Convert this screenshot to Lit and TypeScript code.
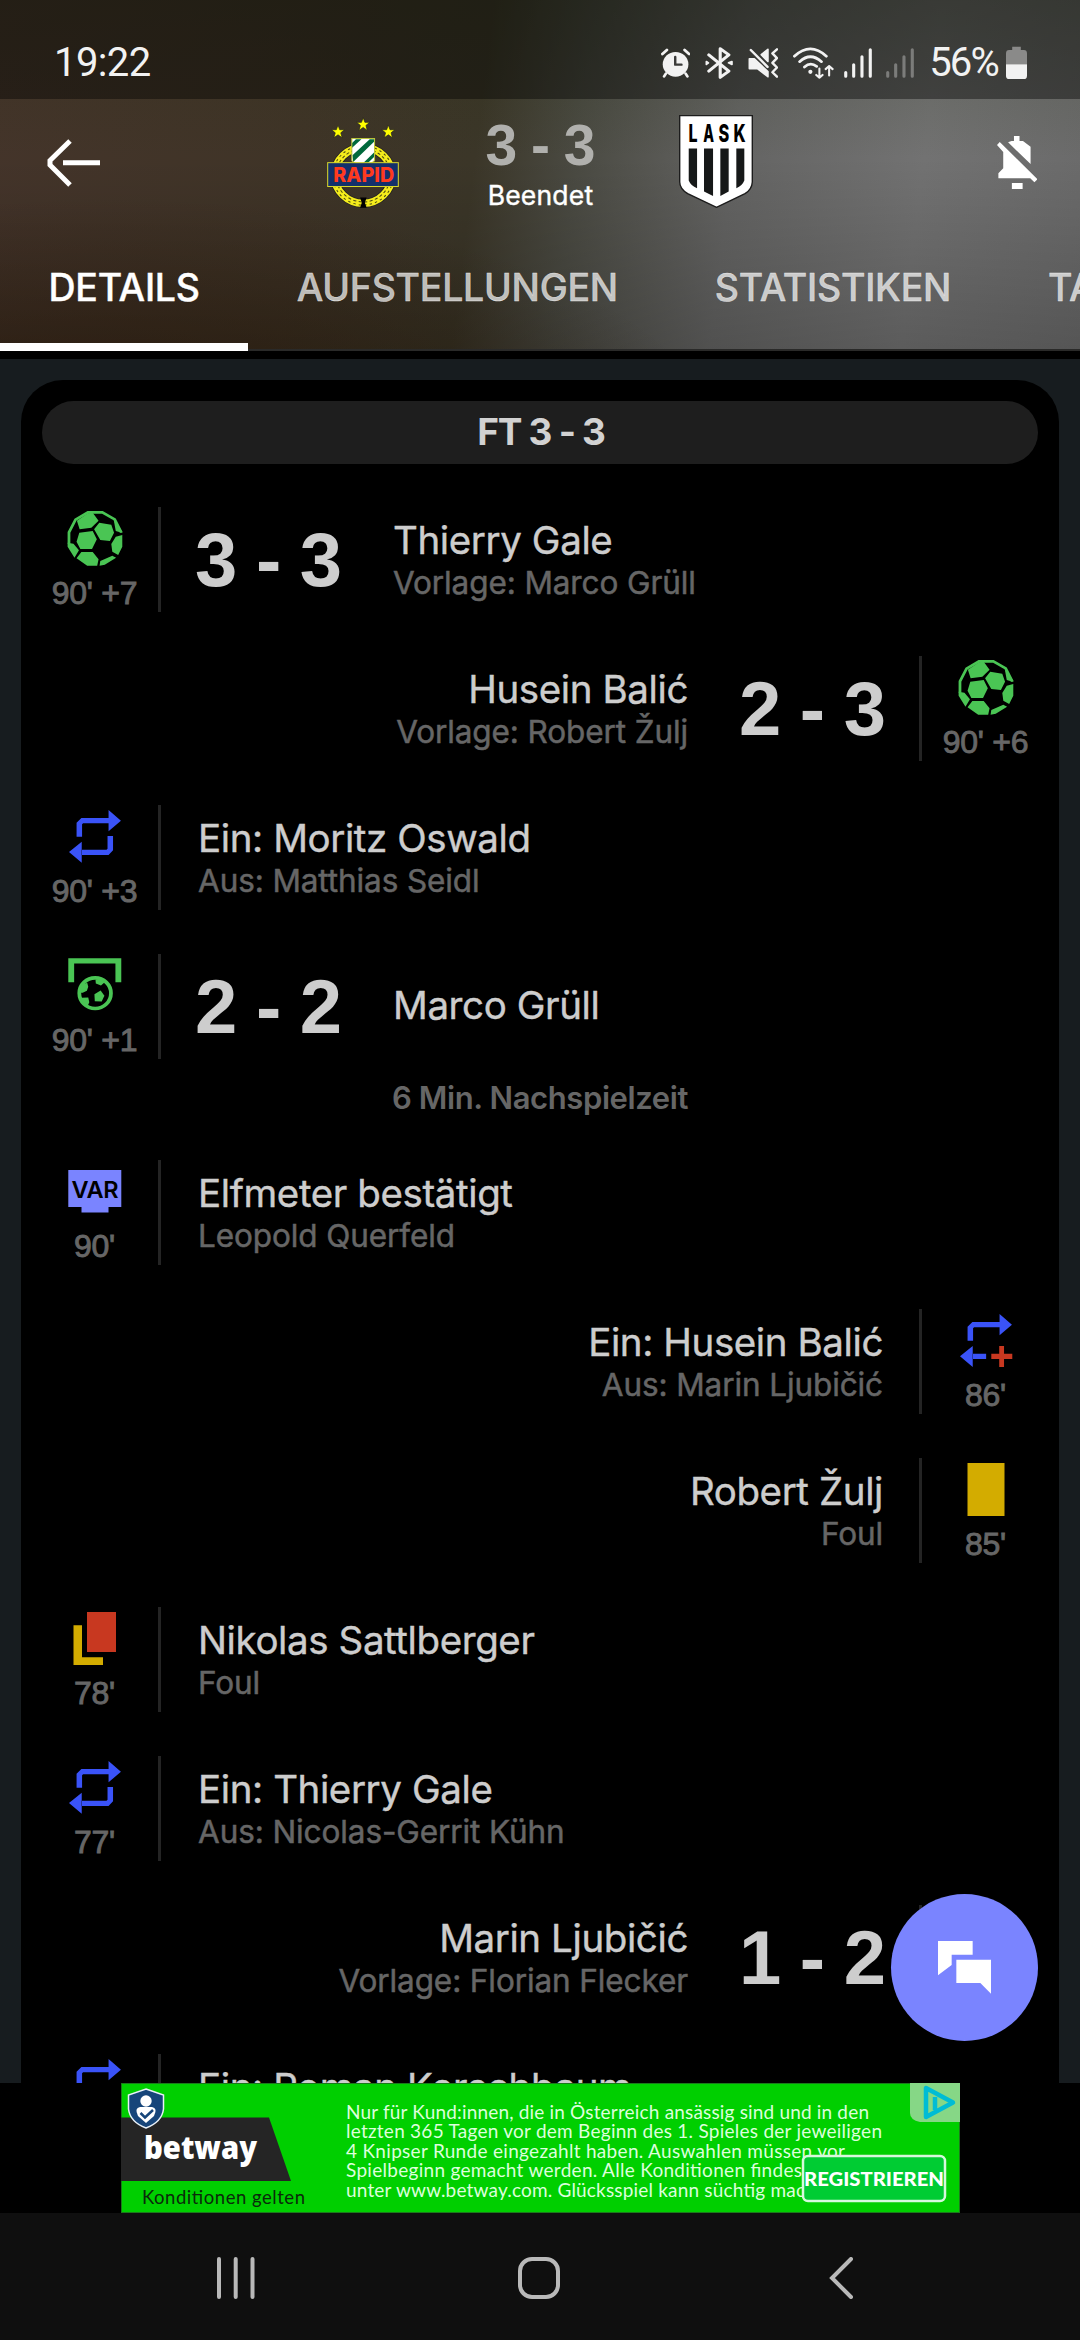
import { LitElement, html, svg, css, nothing, TemplateResult } from 'lit'
import { customElement, property } from 'lit/decorators.js'

type IconName = 'goal' | 'penalty' | 'sub' | 'injury-sub' | 'var' | 'yellow' | 'second-yellow'

interface MatchEvent {
    side: 'home' | 'away'
    icon: IconName
    time: string
    title: string
    detail?: string
    score?: string
    /** Centered remark shown below the event */
    note?: string
}

const EVENTS: MatchEvent[] = [
    { side: 'home', icon: 'goal', time: "90' +7", score: '3 - 3', title: 'Thierry Gale', detail: 'Vorlage: Marco Grüll' },
    { side: 'away', icon: 'goal', time: "90' +6", score: '2 - 3', title: 'Husein Balić', detail: 'Vorlage: Robert Žulj' },
    { side: 'home', icon: 'sub', time: "90' +3", title: 'Ein: Moritz Oswald', detail: 'Aus: Matthias Seidl' },
    { side: 'home', icon: 'penalty', time: "90' +1", score: '2 - 2', title: 'Marco Grüll', note: '6 Min. Nachspielzeit' },
    { side: 'home', icon: 'var', time: "90'", title: 'Elfmeter bestätigt', detail: 'Leopold Querfeld' },
    { side: 'away', icon: 'injury-sub', time: "86'", title: 'Ein: Husein Balić', detail: 'Aus: Marin Ljubičić' },
    { side: 'away', icon: 'yellow', time: "85'", title: 'Robert Žulj', detail: 'Foul' },
    { side: 'home', icon: 'second-yellow', time: "78'", title: 'Nikolas Sattlberger', detail: 'Foul' },
    { side: 'home', icon: 'sub', time: "77'", title: 'Ein: Thierry Gale', detail: 'Aus: Nicolas-Gerrit Kühn' },
    { side: 'away', icon: 'goal', time: '', score: '1 - 2', title: 'Marin Ljubičić', detail: 'Vorlage: Florian Flecker' },
    { side: 'home', icon: 'sub', time: '', title: 'Ein: Roman Kerschbaum', detail: '\u00a0' },
]

const SUB_IN = svg`<path d="M115 0L151 32L115 64ZM22 80V38L36 24H116V40H41L38 43V80Z"/>`

const ICONS: Record<IconName, TemplateResult> = {
    goal: svg`
        <g transform="translate(.6 0) scale(.344 .3333)" fill="#4ac554">
            <path d="M27 29L59 7L73 5L90 29L69 50L35 55ZM77 55L92 35L127 41L135 65L123 90L95 87Z"/>
            <path d="M34 65L73 60L85 85L71 114L37 114L26 92ZM140 77L159 72V107L147 132L130 122L127 99Z"/>
            <path d="M26 142L40 123H73L90 145L86 164H57ZM0 95L17 98L33 118L20 140L0 107Z"/>
            <path d="M93 164L95 150L130 134L141 140L108 161ZM134 26L159 62V66L140 60Z"/>
            <path d="M4 98V64L23 26L59 4H101L137 25L156 64" fill="none" stroke="#4ac554" stroke-width="8"/>
        </g>`,
    penalty: svg`
        <g transform="translate(1.3 .2) scale(.344 .3333)" fill="#4ac554">
            <path d="M0 72V0H154V72H137V16H17V72Z"/>
            <circle cx="78" cy="105" r="46" fill="none" stroke="#4ac554" stroke-width="11"/>
            <path d="M79 64L104 66L106 72L95 82L80 76ZM34 82L55 74L58 86L54 98L42 104L32 104ZM38 119L58 118L61 132L56 144L44 138Z"/>
            <path d="M76 108L94 97L105 113L97 130L77 129Z"/>
        </g>`,
    sub: svg`
        <g transform="translate(2 1) scale(.344 .3333)" fill="#3a53f8">
            ${SUB_IN}
            <path d="M37 95L0 126L37 158ZM128 78V121L115 135H36V119H109L112 116V78Z"/>
        </g>`,
    'injury-sub': svg`
        <g transform="translate(2 1) scale(.344 .3333)" fill="#3a53f8">
            ${SUB_IN}
            <path d="M37 96L0 127L37 159ZM36 119H76V135H36Z"/>
            <path d="M114 96H128V119H152V135H128V159H114V135H91V119H114Z" fill="#c83820"/>
        </g>`,
    var: svg`
        <path d="M1.3 6H54.3V43H41.5V48.5H14.5V43H1.3Z" fill="#7a84ff"/>
        <text x="4.5" y="33.8" textLength="47" font-family="Inter, sans-serif" font-weight="600" font-size="23.5">VAR</text>`,
    yellow: svg`<path d="M9.5 1H46.5V54H9.5Z" fill="#d3ac00"/>`,
    'second-yellow': svg`
        <path d="M6.5 14.3H15V46.3H36V54H6.5Z" fill="#d3ac00"/>
        <path d="M20 1H49V41H20Z" fill="#c83820"/>`,
}

@customElement('event-row')
export class EventRow extends LitElement {
    @property({ attribute: false })
    event!: MatchEvent

    static styles = css`
        :host {
            display: block;
        }

        .row {
            display: flex;
            height: 105px;
        }

        .away {
            flex-direction: row-reverse;
            text-align: right;
        }

        .marker {
            width: 105px;
            display: flex;
            flex-direction: column;
            align-items: center;
            padding-top: 4px;
            box-sizing: border-box;
        }

        .marker svg {
            width: 56px;
            height: 56px;
            flex: none;
        }

        .time {
            margin-top: 10px;
            color: #666;
            font: 32px/32px 'Liberation Sans', Arial, sans-serif;
            letter-spacing: -0.3px;
            white-space: pre;
            -webkit-text-stroke: 0.9px #666;
        }

        .divider {
            width: 3px;
            margin: 0 11px;
            background: #242424;
        }

        .score {
            width: 148px;
            margin: 0 22px 0 23px;
            color: #cdcdcd;
            font: bold 76px/106px 'Liberation Sans', Arial, sans-serif;
            word-spacing: -2.5px;
            white-space: nowrap;
        }

        .away .score {
            margin: 0 22px;
        }

        .text {
            display: flex;
            flex-direction: column;
            justify-content: center;
            padding: 0 26px;
            font-family: Inter, sans-serif;
        }

        .away .text {
            padding: 0 25px;
        }

        .row .score + .text {
            padding: 0;
            margin: 0 28px;
        }

        .title {
            color: #cdcdcd;
            font-size: 38.5px;
            line-height: 46px;
            letter-spacing: -0.4px;
            -webkit-text-stroke: 0.4px #cdcdcd;
        }

        .title:only-child {
            margin-bottom: 3px;
        }

        .detail {
            color: #666;
            font-size: 31.5px;
            line-height: 39px;
            letter-spacing: -0.1px;
            -webkit-text-stroke: 0.5px #666;
        }

        .note {
            margin: 22px 0 2px;
            color: #666;
            font: 600 31px/33px Inter, sans-serif;
            text-align: center;
            letter-spacing: -0.4px;
        }
    `

    render() {
        const { side, icon, time, title, detail, score, note } = this.event
        return html`
            <div class="row ${side}">
                <div class="marker">
                    <svg viewBox="0 0 56 56">${ICONS[icon]}</svg>
                    <div class="time">${time}</div>
                </div>
                <div class="divider"></div>
                ${score ? html`<div class="score">${score}</div>` : nothing}
                <div class="text">
                    <div class="title">${title}</div>
                    ${detail ? html`<div class="detail">${detail}</div>` : nothing}
                </div>
            </div>
            ${note ? html`<div class="note">${note}</div>` : nothing}
        `
    }
}

@customElement('status-bar')
export class StatusBar extends LitElement {
    static styles = css`
        :host {
            display: flex;
            align-items: center;
            height: 99px;
            padding: 26px 53px 0 54px;
            box-sizing: border-box;
            background: rgba(0, 0, 0, 0.4);
            color: #f2f2f2;
            font: 40px/40px Roboto, sans-serif;
        }

        .clock {
            flex: 1;
            letter-spacing: -0.6px;
        }

        .icons {
            display: flex;
            align-items: center;
        }

        svg {
            display: block;
            fill: #f2f2f2;
            stroke: #f2f2f2;
            stroke-linecap: round;
            stroke-linejoin: round;
        }

        .signal {
            margin-left: 10px;
        }

        .weak {
            margin-left: 14px;
            opacity: 0.35;
        }

        .gap {
            margin-left: 15px;
        }

        .percent {
            letter-spacing: -1.8px;
            margin: 0 8px 0 15px;
        }

        .empty {
            fill: #8a8a89;
            stroke: none;
        }

        .charge {
            stroke: none;
        }
    `

    private signal(cls: string) {
        return html`
            <svg class=${cls} width="28" height="30" viewBox="0 0 81 89" preserveAspectRatio="none">
                <path d="M5 73V84M28 50V84M52 26V84M76 5V84" stroke-width="9"/>
            </svg>
        `
    }

    render() {
        return html`
            <div class="clock">19:22</div>
            <div class="icons">
                <svg width="29.5" height="30" viewBox="0 0 85 90" preserveAspectRatio="none">
                    <circle cx="42" cy="49" r="37" stroke="none"/>
                    <path d="M4 18L17 6M68 6L81 18M14 77L9 85M71 77L76 85" fill="none" stroke-width="8"/>
                    <path d="M41 27V50H59" fill="none" stroke="#3b3b3a" stroke-width="7"/>
                </svg>
                <svg class="gap" width="28" height="32" viewBox="0 0 81 97" preserveAspectRatio="none">
                    <path d="M11 24L69 73L44 92V5L69 24L11 73" fill="none" stroke-width="9"/>
                    <path d="M4 44L10 48L4 53ZM68 48L78 44V53Z" stroke-width="5"/>
                </svg>
                <svg class="gap" width="30" height="30" viewBox="0 0 86 89" preserveAspectRatio="none">
                    <path d="M4 32H18L57 70V85L27 61H4ZM38 20L57 4V40Z" stroke-width="5"/>
                    <path d="M8 6L56 56" fill="none" stroke-width="7"/>
                    <path d="M83 4L70 16L83 30L70 44L83 58L70 72L83 85" fill="none" stroke-width="7"/>
                </svg>
                <svg class="gap" width="41" height="32" viewBox="0 0 118 94" preserveAspectRatio="none">
                    <path d="M4 27Q50 -16 96 27M19 43Q50 14 82 43M33 59Q50 43 68 57" fill="none" stroke-width="8"/>
                    <circle cx="50" cy="73" r="6" stroke="none"/>
                    <path d="M76 63V90M67 82L76 90L85 82M104 84V56M94 65L104 56L114 65" fill="none" stroke-width="6"/>
                </svg>
                ${this.signal('signal')}
                ${this.signal('weak')}
                <span class="percent">56%</span>
                <svg width="21" height="33" viewBox="0 0 61 98" preserveAspectRatio="none">
                    <path class="empty" d="M18 2H43V12H52Q61 12 61 22V54H0V22Q0 12 9 12H18Z"/>
                    <path class="charge" d="M0 54H61V88Q61 98 52 98H9Q0 98 0 88Z"/>
                </svg>
            </div>
        `
    }
}

@customElement('match-header')
export class MatchHeader extends LitElement {
    static styles = css`
        :host {
            display: block;
            height: 351px;
            overflow: hidden;
            background:
                radial-gradient(ellipse 620px 260px at 10% 130%, rgba(34, 18, 2, 0.65), transparent),
                linear-gradient(180deg, rgba(40, 50, 20, 0.25), transparent 45%, rgba(0, 0, 0, 0.2)),
                linear-gradient(97deg, #44342a 0%, #3f3427 28%, #3b3628 44%, #4a4a42 53%, #646463 67%, #727272 84%, #6a6a6a 100%);
            font-family: Inter, sans-serif;
        }

        .bar {
            display: grid;
            grid-template-columns: 327px 73px 279px 74px 1fr;
            height: 133px;
        }

        .back {
            padding: 40px 0 0 47px;
        }

        .home {
            padding-top: 18px;
        }

        .guest {
            padding-top: 16px;
        }

        .bell {
            display: flex;
            justify-content: flex-end;
            padding: 37px 43px 0 0;
        }

        svg {
            display: block;
        }

        .result {
            padding: 18px 0 0 2px;
            text-align: center;
        }

        .score {
            color: #b0b0ad;
            font: bold 57px/56px 'Liberation Sans', Arial, sans-serif;
            word-spacing: -2px;
        }

        .state {
            color: #fff;
            font-size: 26.5px;
            line-height: 44px;
            letter-spacing: 0.2px;
            -webkit-text-stroke: 0.4px #fff;
        }

        .tabs {
            display: flex;
            height: 119px;
            box-shadow: inset 0 -2px #2a2a29;
        }

        .tab {
            flex: none;
            padding: 0 48.5px;
            color: rgba(255, 255, 255, 0.7);
            font-size: 37.5px;
            font-weight: 500;
            line-height: 111px;
            letter-spacing: -0.27px;
            border-bottom: 8px solid transparent;
            -webkit-text-stroke: 0.4px currentColor;
        }

        .active {
            color: #fff;
            border-color: #fff;
        }
    `

    private star(x: number, y: number) {
        return svg`<path transform="translate(${x} ${y})" d="M0 -20L5 -6H19L8 3L12 18L0 9L-12 18L-8 3L-19 -6H-5Z" fill="#ff0" stroke="#222" stroke-width="2"/>`
    }

    render() {
        return html`
            <status-bar></status-bar>
            <div class="bar">
                <div class="back">
                    <svg width="54" height="48" viewBox="0 0 54 48" fill="none" stroke="#fff" stroke-width="5">
                        <path d="M23 2L3 21.5V26L23 46M16 23.8H53"/>
                    </svg>
                </div>
                <div class="home">
                    <svg width="72" height="91" viewBox="0 0 209 271" preserveAspectRatio="none">
                        ${this.star(32, 44)}${this.star(105, 22)}${this.star(178, 44)}
                        <circle cx="105" cy="174" r="83" fill="none" stroke="#222" stroke-width="27"/>
                        <circle cx="105" cy="174" r="83" fill="none" stroke="#f4ec1c" stroke-width="22"/>
                        <circle cx="105" cy="174" r="88" fill="none" stroke="#4b4a10" stroke-width="3" stroke-dasharray="7 9"/>
                        <circle cx="105" cy="174" r="79" fill="none" stroke="#4b4a10" stroke-width="3" stroke-dasharray="9 7"/>
                        <path d="M96 240H115L110 255L115 270H96L101 255Z" fill="#000"/>
                        <path d="M72 64H138V130Q130 140 105 144Q80 140 72 130Z" fill="#fff"/>
                        <path d="M72 92L100 66H84L72 78ZM76 134L138 72V66H124L74 114ZM100 142L138 104V118L118 138Z" fill="#00693c"/>
                        <path d="M72 64H138V130Q130 140 105 144Q80 140 72 130Z" fill="none" stroke="#b9c23a" stroke-width="3"/>
                        <rect x="2" y="136" width="205" height="71" fill="#13306b" stroke="#d8d82c" stroke-width="3"/>
                        <text x="18" y="193" textLength="177" lengthAdjust="spacingAndGlyphs" font-weight="800" font-size="58" fill="#ff3a1e">RAPID</text>
                    </svg>
                </div>
                <div class="result">
                    <div class="score">3 - 3</div>
                    <div class="state">Beendet</div>
                </div>
                <div class="guest">
                    <svg width="74" height="93" viewBox="0 0 213 278" preserveAspectRatio="none">
                        <path d="M2 2H211V200Q210 222 190 235L108 276L25 235Q2 220 2 200Z" fill="#fff" stroke="#1c1c1c" stroke-width="4"/>
                        <g font-weight="800" font-size="72" fill="#000">
                            <text x="27" y="82" textLength="26" lengthAdjust="spacingAndGlyphs">L</text>
                            <text x="70" y="82" textLength="31" lengthAdjust="spacingAndGlyphs">A</text>
                            <text x="114" y="82" textLength="31" lengthAdjust="spacingAndGlyphs">S</text>
                            <text x="157" y="82" textLength="35" lengthAdjust="spacingAndGlyphs">K</text>
                        </g>
                        <path d="M28 100H52V219Q34 212 28 196ZM72 100H98V242L72 229ZM119 100H143V229L119 242ZM165 100H188V196Q182 212 165 219Z" fill="#161818"/>
                    </svg>
                </div>
                <div class="bell">
                    <svg width="40.5" height="53" viewBox="0 0 117 159" preserveAspectRatio="none" fill="#fff">
                        <path d="M49 0H65V15H75L97 32V84L32 19L42 15H49ZM43 141H74V159H43Z"/>
                        <path d="M8 18L117 130L108 139L96 127H4V112L18 97V48L0 27Z"/>
                    </svg>
                </div>
            </div>
            <div class="tabs">
                <div class="tab active">DETAILS</div>
                <div class="tab">AUFSTELLUNGEN</div>
                <div class="tab">STATISTIKEN</div>
                <div class="tab">TABELLE</div>
            </div>
        `
    }
}

@customElement('ad-banner')
export class AdBanner extends LitElement {
    static styles = css`
        :host {
            display: flex;
            justify-content: center;
            height: 130px;
            background: #000;
        }

        svg {
            display: block;
        }

        .copy {
            font: 19px Lato, sans-serif;
            fill: #dcffdc;
        }

        .terms {
            font: 18.5px Lato, sans-serif;
            fill: #0b2a0b;
        }

        .brand {
            font: 800 31px 'Open Sans', sans-serif;
            fill: #fff;
        }

        .cta {
            font: 900 18px Lato, sans-serif;
            fill: #fff;
        }
    `

    render() {
        return html`
            <svg width="839" height="130" viewBox="0 0 839 130">
                <rect x=".5" y=".5" width="838" height="129" fill="#00cf00" stroke="#1b7a1b"/>
                <path d="M0 34.5H148L170 98H0Z" fill="#252525"/>
                <text class="brand" x="23" y="76" textLength="113" lengthAdjust="spacingAndGlyphs">betway</text>
                <path d="M25 6L42.5 12V26Q41 39 25 45Q9 39 7.5 26V12Z" fill="#16457a" stroke="#e8f0f8" stroke-width="1.5"/>
                <circle cx="25" cy="18" r="5.7" fill="#fff"/>
                <path d="M25 40L17 33Q13 25 19 24H31Q37 25 33 33Z" fill="#fff"/>
                <path d="M19.5 30L24 34.5L32 27" fill="none" stroke="#16457a" stroke-width="2.5"/>
                <text class="terms" x="21" y="121" textLength="163">Konditionen gelten</text>
                <g class="copy">
                    <text x="225" y="35.8" textLength="523">Nur für Kund:innen, die in Österreich ansässig sind und in den</text>
                    <text x="225" y="55.3" textLength="536">letzten 365 Tagen vor dem Beginn des 1. Spieles der jeweiligen</text>
                    <text x="225" y="74.8" textLength="499">4 Knipser Runde eingezahlt haben. Auswahlen müssen vor</text>
                    <text x="225" y="94.3" textLength="456">Spielbeginn gemacht werden. Alle Konditionen findes</text>
                    <text x="225" y="113.8" textLength="459">unter www.betway.com. Glücksspiel kann süchtig mac</text>
                </g>
                <rect x="682" y="73" width="142" height="45" rx="5" fill="#00cc33" stroke="#d6f8dc" stroke-width="2.5"/>
                <text class="cta" x="683" y="102.5" textLength="140" lengthAdjust="spacingAndGlyphs">REGISTRIEREN</text>
                <path d="M789 0H839V39H799Q789 37 789 30Z" fill="#86d786"/>
                <path d="M805 5V34L832 19.5ZM814 14V27" fill="none" stroke="#00bcd4" stroke-width="4.5" stroke-linejoin="round"/>
            </svg>
        `
    }
}

@customElement('app-root')
export class AppRoot extends LitElement {
    static styles = css`
        :host {
            display: flex;
            flex-direction: column;
            position: relative;
            width: 1080px;
            height: 2340px;
            overflow: hidden;
            background: #000;
        }

        .content {
            height: 1724px;
            margin-top: 8px;
            padding: 21px 21px 0;
            box-sizing: border-box;
            overflow: hidden;
            background: #171c1f;
        }

        .card {
            display: flex;
            flex-direction: column;
            gap: 44px;
            min-height: 1750px;
            padding: 21px;
            box-sizing: border-box;
            border-radius: 42px;
            background: #000;
        }

        .full-time {
            height: 63px;
            margin-bottom: -1px;
            border-radius: 32px;
            background: #1e1e1e;
            color: #d2d2d2;
            font: 700 37px/61px Inter, sans-serif;
            letter-spacing: -1.3px;
            text-indent: 2px;
            text-align: center;
        }

        .chat {
            position: absolute;
            left: 891px;
            top: 1894px;
            width: 147px;
            height: 147px;
            border-radius: 50%;
            background: #7a84ff;
        }

        .chat svg {
            display: block;
        }

        .nav {
            flex: 1;
            display: flex;
            justify-content: space-between;
            align-items: center;
            padding: 2px 218px 0 215px;
            background: #0f0f0f;
        }
    `

    render() {
        return html`
            <match-header></match-header>
            <div class="content">
                <div class="card">
                    <div class="full-time">FT 3 - 3</div>
                    ${EVENTS.map((event) => html`<event-row .event=${event}></event-row>`)}
                </div>
            </div>
            <ad-banner></ad-banner>
            <div class="nav">
                ${[
                    svg`<path d="M4 2V40M20.7 2V40M37.5 2V40"/>`,
                    svg`<rect x="2" y="2" width="38" height="38" rx="12"/>`,
                    svg`<path d="M31 2L12 21L31 40"/>`,
                ].map(
                    (shape) => html`
                        <svg width="42" height="42" viewBox="0 0 42 42" fill="none" stroke="#b9b9b9" stroke-width="4" stroke-linecap="round">
                            ${shape}
                        </svg>
                    `
                )}
            </div>
            <div class="chat">
                <svg width="147" height="147" viewBox="0 0 441 441" fill="#fff">
                    <path d="M141 141H245V182H182V213L141 244ZM196 197H300V299L268 267H196Z"/>
                </svg>
            </div>
        `
    }
}
